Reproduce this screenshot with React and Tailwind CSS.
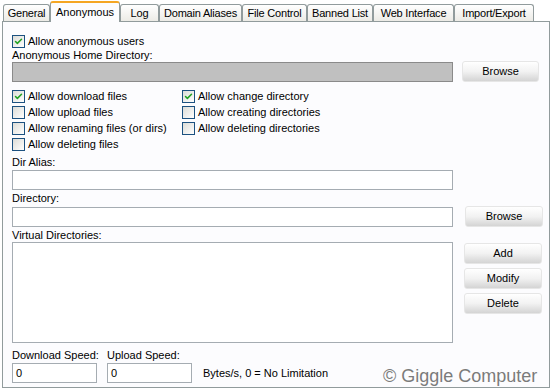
import { Check } from 'lucide-react'

const tabs = [
  { label: 'General', w: 47 },
  { label: 'Anonymous', w: 70, active: true },
  { label: 'Log', w: 39 },
  { label: 'Domain Aliases', w: 83 },
  { label: 'File Control', w: 65 },
  { label: 'Banned List', w: 66 },
  { label: 'Web Interface', w: 81 },
  { label: 'Import/Export', w: 80 },
]

function Tab({ label, w, active }) {
  if (active) {
    return (
      <div
        style={{ width: w }}
        className="h-[21px] -mb-px relative z-10 bg-[#fcfcfe] border-x border-[#919b9c] rounded-t-[3px] border-t-2 border-t-[#f5a623] flex items-center justify-center text-black"
      >
        {label}
      </div>
    )
  }
  return (
    <div
      style={{ width: w }}
      className="h-[17px] bg-gradient-to-b from-white to-[#ecebe6] border border-b-0 border-[#919b9c] rounded-t-[3px] flex items-center justify-center text-black tracking-[-0.2px]"
    >
      {label}
    </div>
  )
}

function Checkbox({ checked, label }) {
  return (
    <div className="flex items-center h-[13px] gap-[3px]">
      <div className="w-[13px] h-[13px] border border-[#1c5180] bg-gradient-to-br from-[#dcdcd7] to-white flex items-center justify-center shrink-0">
        {checked && <Check size={9} strokeWidth={4} className="text-[#21a121]" />}
      </div>
      <span className="leading-[13px] whitespace-nowrap">{label}</span>
    </div>
  )
}

function Button({ children, className = '' }) {
  return (
    <div
      className={`h-[21px] w-[77px] rounded-[3px] border border-[#e6e6e6] bg-gradient-to-b from-white via-[#f2f2f2] to-[#d4d4d4] flex items-center justify-center text-black ${className}`}
    >
      {children}
    </div>
  )
}

function Label({ children }) {
  return <div className="h-[13px] leading-[13px] whitespace-nowrap">{children}</div>
}

function Field({ className = '', children }) {
  return (
    <div className={`h-[20px] border border-[#a5acb2] bg-white flex items-center px-[3px] ${className}`}>
      {children}
    </div>
  )
}

export default function App() {
  return (
    <div
      className="w-[554px] h-[390px] bg-white text-[11px] text-black relative overflow-hidden"
      style={{ fontFamily: '"Liberation Sans", Arial, sans-serif' }}
    >
      <div className="flex items-end h-[21px] pl-[3px]">
        {tabs.map(t => (
          <Tab key={t.label} {...t} />
        ))}
      </div>

      <div className="ml-[2px] w-[548px] h-[367px] border border-[#919b9c] bg-[#fcfcfe] pl-[9px] pt-[13px] flex flex-col">
        <Checkbox checked label="Allow anonymous users" />
        <div className="mt-[1px]">
          <Label>Anonymous Home Directory:</Label>
        </div>
        <div className="flex items-end mt-[-1px]">
          <div className="w-[441px] h-[20px] border border-[#8a8a8a] bg-[#c0c0c0]" />
          <Button className="ml-[9px]">Browse</Button>
        </div>

        <div className="flex mt-[8px]">
          <div className="w-[170px] flex flex-col gap-[3px]">
            <Checkbox checked label="Allow download files" />
            <Checkbox label="Allow upload files" />
            <Checkbox label="Allow renaming files (or dirs)" />
            <Checkbox label="Allow deleting files" />
          </div>
          <div className="flex flex-col gap-[3px]">
            <Checkbox checked label="Allow change directory" />
            <Checkbox label="Allow creating directories" />
            <Checkbox label="Allow deleting directories" />
          </div>
        </div>

        <div className="mt-[5px]">
          <Label>Dir Alias:</Label>
        </div>
        <Field className="w-[441px] mt-[1px]" />

        <div className="mt-[2px]">
          <Label>Directory:</Label>
        </div>
        <div className="flex items-center mt-[1px]">
          <Field className="w-[441px]" />
          <Button className="ml-[12px] w-[78px] h-[20px]">Browse</Button>
        </div>

        <div className="mt-[2px]">
          <Label>Virtual Directories:</Label>
        </div>
        <div className="flex">
          <div className="w-[441px] h-[101px] border border-[#a5acb2] bg-white" />
          <div className="ml-[11px] mt-[1px] flex flex-col gap-[4px]">
            <Button className="w-[78px] h-[19px]">Add</Button>
            <Button className="w-[78px] h-[19px]">Modify</Button>
            <Button className="w-[78px] h-[19px]">Delete</Button>
          </div>
        </div>

        <div className="flex mt-[6px] items-end">
          <div className="flex flex-col w-[95px]">
            <Label>Download Speed:</Label>
            <Field className="w-[85px] mt-[1px]">0</Field>
          </div>
          <div className="flex flex-col w-[96px]">
            <Label>Upload Speed:</Label>
            <Field className="w-[85px] mt-[1px]">0</Field>
          </div>
          <div className="h-[20px] flex items-center">Bytes/s, 0 = No Limitation</div>
        </div>
      </div>

      <div
        className="absolute left-[383px] top-[366px] text-[18px] leading-[20px] text-[#7b7b7b] whitespace-nowrap"
        style={{ fontFamily: '"Liberation Sans", Arial, sans-serif', textShadow: '0 0 2px #fff, 0 0 1px #fff' }}
      >
        © Giggle Computer
      </div>
    </div>
  )
}
